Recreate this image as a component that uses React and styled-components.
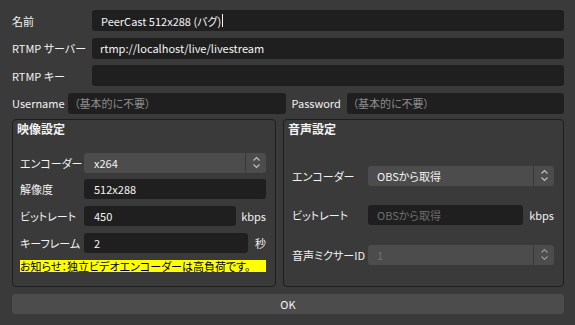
import React from 'react';
import styled, { createGlobalStyle } from 'styled-components';

const GlobalStyle = createGlobalStyle`
  html, body {
    margin: 0;
    padding: 0;
    background: #3a3a3a;
  }
  body {
    font-family: "Noto Sans CJK JP", "Noto Sans", sans-serif;
    font-size: 11px;
    color: #f2f2f2;
    font-feature-settings: "palt";
  }
`;

const Window = styled.div`
  width: 575px;
  height: 325px;
  box-sizing: border-box;
  padding: 10px 11px 0 12px;
  display: flex;
  flex-direction: column;
`;

const TopForm = styled.div`
  display: flex;
  flex-direction: column;
  gap: 6.5px;
`;

const FieldRow = styled.div`
  display: grid;
  grid-template-columns: 80px 1fr;
  align-items: center;
  height: 21px;
`;

const CredRow = styled.div`
  display: grid;
  grid-template-columns: 56px 1fr 61px 1fr;
  align-items: center;
  height: 21px;
`;

const Label = styled.span`
  white-space: nowrap;
  line-height: 16px;
  padding-left: ${(p) => p.$indent || 0}px;
`;

const TextInput = styled.div`
  height: 100%;
  box-sizing: border-box;
  background: #1f1f1f;
  border-radius: 3px;
  padding: 0 ${(p) => p.$pad || 8}px;
  display: flex;
  align-items: center;
  white-space: nowrap;
  overflow: hidden;
  color: ${(p) => (p.$placeholder ? p.$placeholder : '#f4f4f4')};
  flex: 1;
  min-width: 0;
`;

const Caret = styled.span`
  display: inline-block;
  width: 1px;
  height: 13px;
  background: #f4f4f4;
  margin-left: 1px;
`;

const Groups = styled.div`
  display: grid;
  grid-template-columns: 264px 1fr;
  gap: 7px;
  margin-top: 5.5px;
  height: 168px;
`;

const Group = styled.section`
  border: 1px solid #1e1e1e;
  border-radius: 4px;
  display: flex;
  flex-direction: column;
`;

const GroupTitle = styled.h3`
  margin: 0;
  padding: 1px 0 0 4px;
  font-size: 12px;
  font-weight: bold;
  line-height: 16px;
`;

const GroupBody = styled.div`
  display: flex;
  flex-direction: column;
  gap: ${(p) => p.$gap}px;
  padding: ${(p) => p.$top}px ${(p) => p.$right}px 0 ${(p) => p.$left}px;
`;

const FormRow = styled.div`
  display: flex;
  align-items: center;
  height: 20px;
`;

const RowLabel = styled.span`
  width: ${(p) => p.$width}px;
  flex-shrink: 0;
  white-space: nowrap;
  line-height: 16px;
`;

const Unit = styled.span`
  margin-left: ${(p) => p.$gap}px;
  white-space: nowrap;
  line-height: 16px;
`;

const Combo = styled.div`
  flex: 1;
  height: 100%;
  background: #4c4c4c;
  border-radius: 3px;
  display: flex;
  align-items: stretch;
  color: ${(p) => (p.$disabled ? '#727272' : '#f4f4f4')};
`;

const ComboText = styled.span`
  flex: 1;
  display: flex;
  align-items: center;
  padding-left: ${(p) => p.$pad || 10}px;
  white-space: nowrap;
`;

const ComboArrows = styled.span`
  width: 20px;
  border-left: 1px solid #383838;
  display: flex;
  align-items: center;
  justify-content: center;
`;

const Notice = styled.div`
  background: #ffff00;
  color: #000;
  height: 12px;
  line-height: 12px;
  white-space: nowrap;
  margin-top: 1px;
`;

const OkButton = styled.button`
  margin-top: 7px;
  height: 20px;
  width: 100%;
  border: none;
  border-radius: 3px;
  background: #4c4c4c;
  color: #f4f4f4;
  font-family: inherit;
  font-size: 11px;
  padding: 0;
`;

const Arrows = ({ color = '#c4c4c4' }) => (
  <svg width="9" height="13" viewBox="0 0 9 13" fill="none" stroke={color} strokeWidth="1.1">
    <polyline points="1.5,4.5 4.5,1.5 7.5,4.5" />
    <polyline points="1.5,8.5 4.5,11.5 7.5,8.5" />
  </svg>
);

const ComboBox = ({ value, disabled, pad }) => (
  <Combo $disabled={disabled}>
    <ComboText $pad={pad}>{value}</ComboText>
    <ComboArrows>
      <Arrows color={disabled ? '#9a9a9a' : '#c4c4c4'} />
    </ComboArrows>
  </Combo>
);

const App = () => {
  return (
    <>
      <GlobalStyle />
      <Window>
        <TopForm>
          <FieldRow>
            <Label>名前</Label>
            <TextInput $pad={9}>
              PeerCast 512x288 (バグ)<Caret />
            </TextInput>
          </FieldRow>
          <FieldRow>
            <Label>RTMP サーバー</Label>
            <TextInput>rtmp://localhost/live/livestream</TextInput>
          </FieldRow>
          <FieldRow>
            <Label>RTMP キー</Label>
            <TextInput />
          </FieldRow>
          <CredRow>
            <Label>Username</Label>
            <TextInput $placeholder="#8a8a8a" $pad={6}>（基本的に不要）</TextInput>
            <Label $indent={6}>Password</Label>
            <TextInput $placeholder="#8a8a8a" $pad={6}>（基本的に不要）</TextInput>
          </CredRow>
        </TopForm>

        <Groups>
          <Group>
            <GroupTitle>映像設定</GroupTitle>
            <GroupBody $top={15.5} $gap={6.7} $left={7} $right={9}>
              <FormRow>
                <RowLabel $width={64}>エンコーダー</RowLabel>
                <ComboBox value="x264" />
              </FormRow>
              <FormRow>
                <RowLabel $width={64}>解像度</RowLabel>
                <TextInput $pad={10}>512x288</TextInput>
              </FormRow>
              <FormRow>
                <RowLabel $width={64}>ビットレート</RowLabel>
                <TextInput $pad={10}>450</TextInput>
                <Unit $gap={5}>kbps</Unit>
              </FormRow>
              <FormRow>
                <RowLabel $width={64}>キーフレーム</RowLabel>
                <TextInput $pad={10}>2</TextInput>
                <Unit $gap={7}>秒</Unit>
              </FormRow>
              <Notice>お知らせ：独立ビデオエンコーダーは高負荷です。</Notice>
            </GroupBody>
          </Group>

          <Group>
            <GroupTitle>音声設定</GroupTitle>
            <GroupBody $top={28.5} $gap={19.5} $left={8} $right={9}>
              <FormRow>
                <RowLabel $width={76}>エンコーダー</RowLabel>
                <ComboBox value="OBSから取得" pad={9} />
              </FormRow>
              <FormRow>
                <RowLabel $width={76}>ビットレート</RowLabel>
                <TextInput $placeholder="#6e6e6e" $pad={9}>OBSから取得</TextInput>
                <Unit $gap={6}>kbps</Unit>
              </FormRow>
              <FormRow>
                <RowLabel $width={76}>音声ミクサーID</RowLabel>
                <ComboBox value="1" disabled pad={9} />
              </FormRow>
            </GroupBody>
          </Group>
        </Groups>

        <OkButton type="button">OK</OkButton>
      </Window>
    </>
  );
};

export default App;
